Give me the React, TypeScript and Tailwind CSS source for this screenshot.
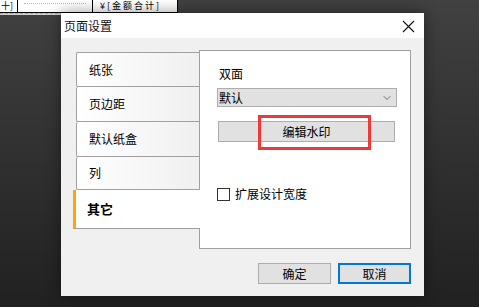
import { ChevronDown } from 'lucide-react'

const font = { fontFamily: '"Noto Sans CJK SC", "Noto Sans", sans-serif' }

const tabs = [
  { label: '纸张', h: 'h-[35px]' },
  { label: '页边距', h: 'h-[35px]' },
  { label: '默认纸盒', h: 'h-[35px]' },
  { label: '列', h: 'h-[33px]' },
]

export default function App() {
  return (
    <div
      className="relative w-[479px] h-[307px] overflow-hidden bg-gradient-to-b from-[#414141] to-[#212121] text-[12px] text-black"
      style={font}
    >
      {/* sheet behind the dialog */}
      <div className="w-[178px]">
        <div className="flex h-[13px] bg-white border-b border-black leading-[12px] text-[9px]">
          <div className="w-[18px] border-r border-black pl-[1px]">十]</div>
          <div className="w-[75px] border-r border-black pt-[3px]">
            <div className="mx-[6px] border-t border-dotted border-[#bbb]" />
          </div>
          <div className="w-[85px] border-r border-black pl-[7px] tracking-[2px]">¥[金额合计]</div>
        </div>
        <div className="h-[2px] border-t border-dashed border-[#a8a8a8] bg-[#d0d0d0]" />
      </div>

      {/* dialog */}
      <div className="absolute left-[61px] top-[13px] w-[363px] h-[283px] flex flex-col shadow-[0_0_14px_rgba(0,0,0,0.45)]">
        <div className="h-[25px] bg-white flex items-center justify-between pl-[3px] pr-[9px]">
          <span className="text-[12px] text-[#111]">页面设置</span>
          <svg width="13" height="13" viewBox="0 0 13 13" className="mt-[1px]">
            <path d="M1 1 L12 12 M12 1 L1 12" stroke="#111" strokeWidth="1.1" />
          </svg>
        </div>
        <div className="flex-1 bg-[#f0f0f0] flex flex-col pl-[12px] pt-[12px] pr-[13px]">
          <div className="flex">
            <div className="flex flex-col w-[126px] pt-[2px] relative z-10">
              {tabs.map((t, i) => (
                <div
                  key={t.label}
                  className={`ml-[3px] ${t.h} flex items-center pl-[12px] border-l border-b border-[#a0a0a0] rounded-tl-[2px] rounded-bl-[2px] bg-gradient-to-r from-white to-[#f0f0f0] ${i === 0 ? 'border-t' : ''}`}
                >
                  {t.label}
                </div>
              ))}
              <div className="h-[39px] w-[127px] flex items-center pl-[11px] bg-white border-b border-[#a0a0a0] border-l-[3px] border-l-[#ffa500] font-bold text-[13px]">
                其它
              </div>
            </div>
            <div className="relative w-[213px] h-[199px] bg-white border border-[#a0a0a0] pl-[17px] pt-[14px]">
              <div className="pl-[2px] leading-[18px]">双面</div>
              <div className="mt-[5px] w-[180px] h-[19px] bg-[#e1e1e1] border border-[#adadad] flex items-center justify-between pl-[1px] pr-[3px]">
                <span>默认</span>
                <ChevronDown size={12} strokeWidth={1.3} className="text-[#333]" />
              </div>
              <div className="mt-[14px] ml-[1px] w-[177px] h-[21px] bg-[#e1e1e1] border border-[#adadad] flex items-center justify-center">
                编辑水印
              </div>
              <div className="mt-[43px] flex items-center gap-[5px]">
                <div className="w-[13px] h-[13px] border border-[#333] bg-white" />
                <span>扩展设计宽度</span>
              </div>
              <div className="absolute left-[58px] top-[64px] w-[113px] h-[35px] border-[3px] border-[#ef3838]" />
            </div>
          </div>
          <div className="mt-[14px] flex justify-end gap-[7px]">
            <div className="w-[73px] h-[21px] bg-[#e1e1e1] border border-[#adadad] flex items-center justify-center">
              确定
            </div>
            <div className="w-[73px] h-[21px] bg-[#e1e1e1] border-2 border-[#0078d7] flex items-center justify-center">
              取消
            </div>
          </div>
        </div>
      </div>
    </div>
  )
}
